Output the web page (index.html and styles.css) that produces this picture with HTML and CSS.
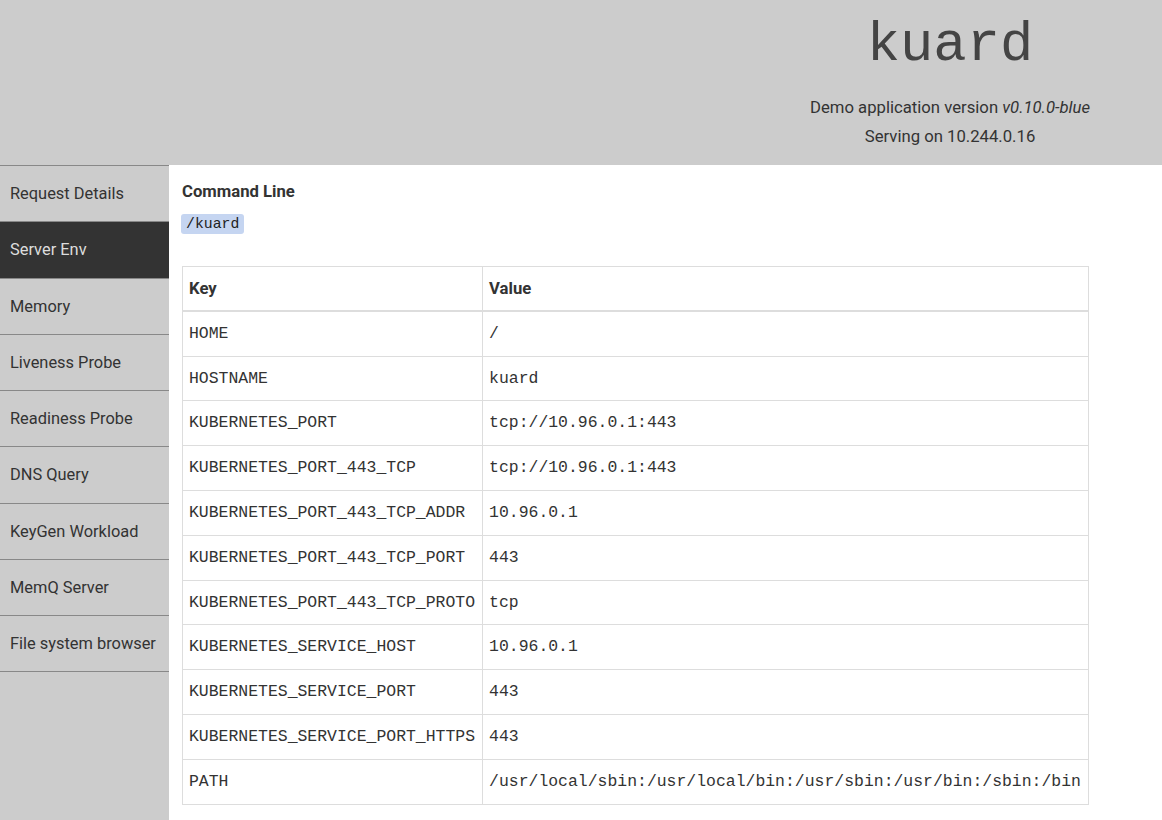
FILE: index.html
```html
<!DOCTYPE html>
<html>
<head>
<meta charset="utf-8">
<title>kuard</title>
<link rel="stylesheet" href="styles.css">
</head>
<body>
<header class="top">
  <div class="brand">
    <h1 class="title">kuard</h1>
    <div class="meta">Demo application version <em>v0.10.0-blue</em></div>
    <div class="meta">Serving on 10.244.0.16</div>
  </div>
</header>
<div class="main">
  <nav class="side">
    <a class="item">Request Details</a>
    <a class="item active">Server Env</a>
    <a class="item">Memory</a>
    <a class="item">Liveness Probe</a>
    <a class="item">Readiness Probe</a>
    <a class="item">DNS Query</a>
    <a class="item">KeyGen Workload</a>
    <a class="item">MemQ Server</a>
    <a class="item">File system browser</a>
  </nav>
  <section class="content">
    <h3 class="section-title">Command Line</h3>
    <div class="cmd"><code class="code">/kuard</code></div>
    <table class="env">
      <thead>
        <tr><th>Key</th><th>Value</th></tr>
      </thead>
      <tbody>
        <tr><td>HOME</td><td>/</td></tr>
        <tr><td>HOSTNAME</td><td>kuard</td></tr>
        <tr><td>KUBERNETES_PORT</td><td>tcp://10.96.0.1:443</td></tr>
        <tr><td>KUBERNETES_PORT_443_TCP</td><td>tcp://10.96.0.1:443</td></tr>
        <tr><td>KUBERNETES_PORT_443_TCP_ADDR</td><td>10.96.0.1</td></tr>
        <tr><td>KUBERNETES_PORT_443_TCP_PORT</td><td>443</td></tr>
        <tr><td>KUBERNETES_PORT_443_TCP_PROTO</td><td>tcp</td></tr>
        <tr><td>KUBERNETES_SERVICE_HOST</td><td>10.96.0.1</td></tr>
        <tr><td>KUBERNETES_SERVICE_PORT</td><td>443</td></tr>
        <tr><td>KUBERNETES_SERVICE_PORT_HTTPS</td><td>443</td></tr>
        <tr><td>PATH</td><td>/usr/local/sbin:/usr/local/bin:/usr/sbin:/usr/bin:/sbin:/bin</td></tr>
      </tbody>
    </table>
  </section>
</div>
</body>
</html>
```

FILE: styles.css
```css
* { box-sizing: border-box; }

html, body {
  margin: 0;
  padding: 0;
}

body {
  font-family: Roboto, "Liberation Sans", sans-serif;
  font-size: 16.7px;
  color: #333;
  background: #fff;
}

.top {
  height: 165px;
  background: #ccc;
  display: flex;
  justify-content: flex-end;
}

.brand {
  width: 424px;
  text-align: center;
  padding-top: 14px;
}

.title {
  margin: 0;
  font-family: "Liberation Mono", monospace;
  font-weight: normal;
  font-size: 55.5px;
  line-height: 64px;
  color: #444;
}

.meta {
  line-height: 29px;
  color: #333;
}

.brand .meta:first-of-type {
  margin-top: 15px;
}

.main {
  display: flex;
  min-height: calc(100vh - 165px);
}

.side {
  width: 169px;
  flex: none;
  background: #ccc;
  border-top: 1px solid #888;
  display: flex;
  flex-direction: column;
}

.item {
  display: flex;
  align-items: center;
  height: 56.25px;
  padding-left: 10px;
  border-bottom: 1px solid #888;
  color: #333;
  font-size: 16.4px;
  white-space: nowrap;
}

.item.active {
  background: #333;
  color: #ddd;
}

.content {
  flex: 1;
  padding: 15px 12px 12px 13px;
}

.section-title {
  margin: 0;
  font-size: 16.7px;
  line-height: 24px;
  font-weight: bold;
  color: #333;
}

.cmd {
  margin-top: 10px;
  height: 20px;
  display: flex;
}

.code {
  font-family: "Liberation Mono", monospace;
  font-size: 14.8px;
  line-height: 20px;
  background: #c5d5f1;
  color: #222;
  border-radius: 3px;
  padding: 0 5px 0 5px;
  margin-left: -1px;
}

.env {
  margin-top: 32px;
  border-collapse: collapse;
  border: 1px solid #ddd;
}

.env th,
.env td {
  text-align: left;
  padding: 10px 7px 10px 6px;
  line-height: 23.8px;
  border: 1px solid #ddd;
  vertical-align: middle;
  white-space: nowrap;
}

.env th {
  font-weight: bold;
  color: #333;
  padding-bottom: 9px;
  border-bottom: 2px solid #ddd;
}

.env td {
  font-family: "Liberation Mono", monospace;
  font-size: 16.45px;
  color: #333;
}
```
